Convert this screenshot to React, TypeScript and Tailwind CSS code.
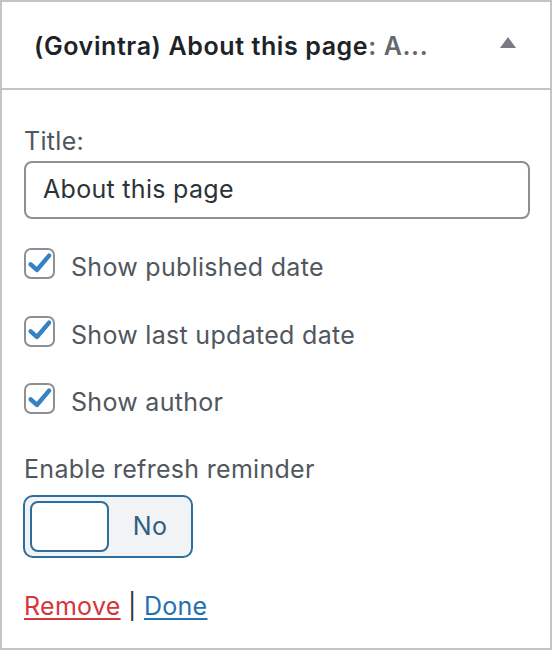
import React from "react";

function Check({ label }: { label: string }) {
  return (
    <div className="flex items-center h-[31px]">
      <div className="w-[31px] h-[31px] rounded-[7px] border-2 border-[#8c8f94] bg-white flex items-center justify-center shrink-0">
        <svg width="26" height="26" viewBox="0 0 20 20">
          <path d="M2.8 10.2 L7.6 14.6 L17 3.6" fill="none" stroke="#3582c4" strokeWidth="3.4" strokeLinecap="round" strokeLinejoin="round" />
        </svg>
      </div>
      <span className="ml-[16px] mt-[8px] text-[25px] tracking-[0.3px] text-[#50575e] leading-none">{label}</span>
    </div>
  );
}

export default function App() {
  return (
    <div className="w-[554px] h-[652px] bg-white" style={{ fontFamily: "Inter, 'Noto Sans', sans-serif" }}>
      <div className="w-[552px] h-[650px] border-2 border-[#c3c4c7] flex flex-col">
        <div className="h-[88px] border-b-2 border-[#c3c4c7] flex items-center pl-[32px] pr-[34px] shrink-0">
          <div className="flex-1 pt-[2px] text-[25px] font-semibold text-[#1d2327] leading-none tracking-[0.6px]">
            (Govintra) About this page<span className="text-[#646970]">: A...</span>
          </div>
          <svg width="16" height="12" viewBox="0 0 16 12" className="mb-[4px]">
            <path d="M8 0 L16 11 L0 11 Z" fill="#787c82" />
          </svg>
        </div>
        <div className="flex flex-col pl-[22px] pr-[20px]">
          <div className="mt-[39px] text-[25px] tracking-[0.3px] text-[#50575e] leading-none">Title:</div>
          <div className="mt-[7px] h-[58px] rounded-[8px] border-2 border-[#8c8f94] flex items-center pl-[17px] text-[25px] tracking-[0.3px] text-[#2c3338]">
            About this page
          </div>
          <div className="mt-[29px] flex flex-col gap-[36.5px]">
            <Check label="Show published date" />
            <Check label="Show last updated date" />
            <Check label="Show author" />
          </div>
          <div className="mt-[43px] text-[25px] tracking-[0.3px] text-[#50575e] leading-none">Enable refresh reminder</div>
          <div className="mt-[13px] -ml-[1px] w-[170px] h-[63px] rounded-[10px] border-2 border-[#2c6e9f] bg-[#f2f3f5] flex items-center py-[4px] pl-[5px]">
            <div className="w-[79px] h-[51px] rounded-[8px] border-2 border-[#2c6e9f] bg-white" />
            <div className="flex-1 text-center text-[25px] tracking-[0.3px] text-[#2c5f85]">No</div>
          </div>
          <div className="mt-[36px] text-[25px] tracking-[0.3px] text-[#50575e] leading-none">
            <span className="text-[#d63638] underline underline-offset-[3px] decoration-2">Remove</span>
            <span className="text-[#2c3338]"> | </span>
            <span className="text-[#2271b1] underline underline-offset-[3px] decoration-2">Done</span>
          </div>
        </div>
      </div>
    </div>
  );
}
